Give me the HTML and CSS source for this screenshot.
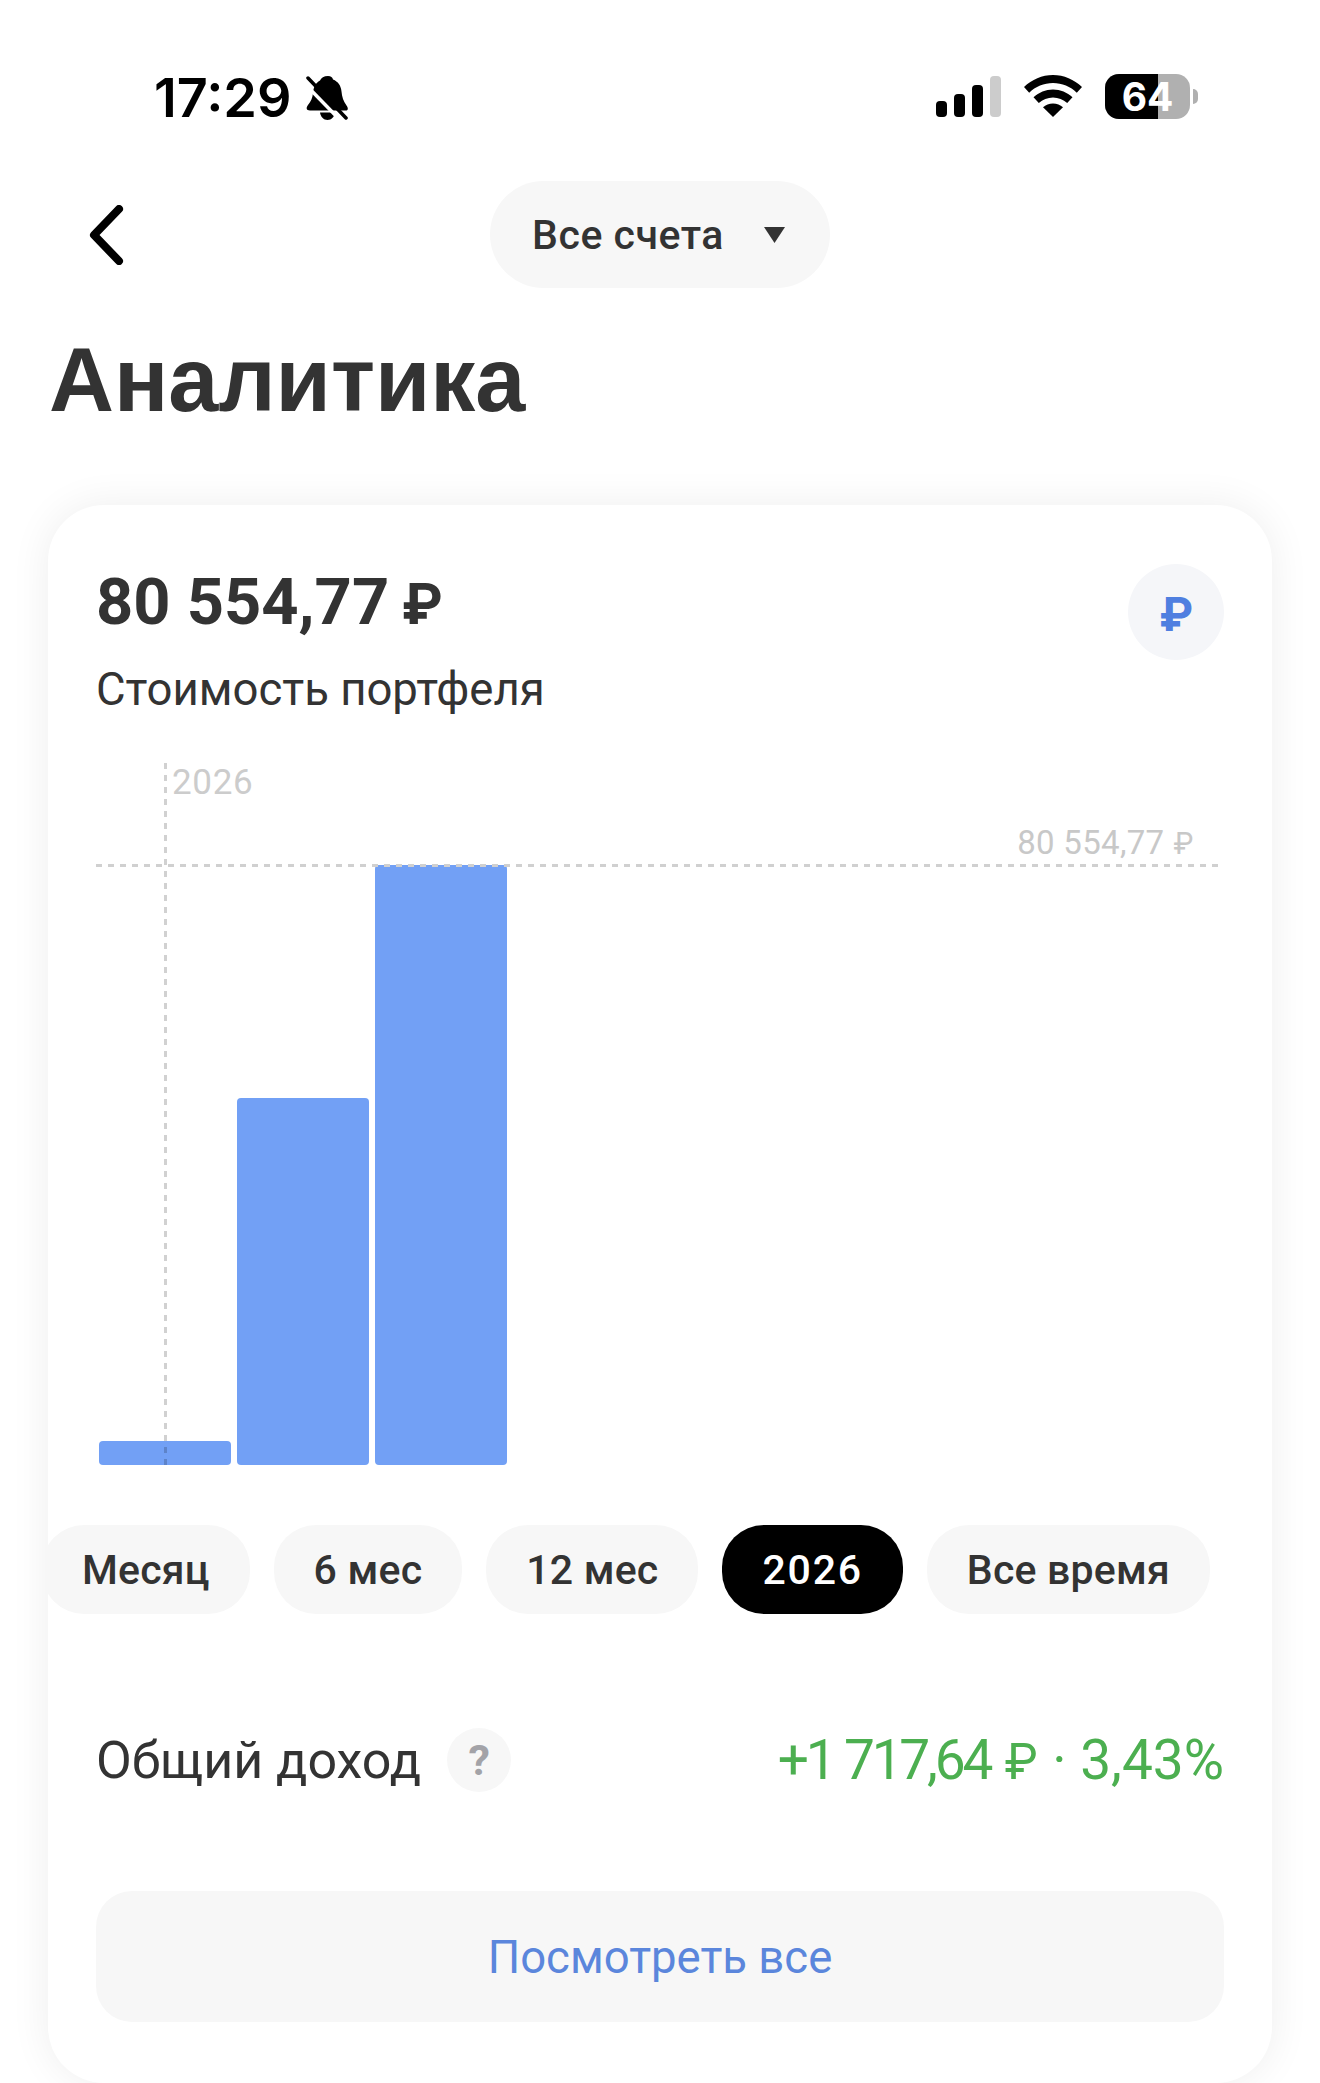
FILE: index.html
```html
<!DOCTYPE html>
<html lang="ru">
<head>
    <meta charset="UTF-8">
    <meta name="viewport" content="width=device-width, initial-scale=1.0">
    <title>Аналитика</title>
    <link rel="stylesheet" href="styles.css">
</head>
<body>
    <div class="status-bar">
        <div class="status-left">
            <span class="time">17:29</span>
            <svg class="bell" viewBox="0 0 44 44" width="44" height="44">
                <path d="M23 0c3 0 4.500 1.500 5 3.500 5 2 8 6 8.500 12 .4 5 2 10 5 14 1.500 2 2 4.500 0 5H5c-4 0-4-3-2-5.500 3-3.500 4.500-7 5-12 .5-5.500 2.500-10 7-12.500C16 2 19 0 23 0z" fill="#000"/>
                <path d="M15 36.500h15c-.5 4-3.500 7.500-7.500 7.500s-7-3.500-7.500-7.500z" fill="#000"/>
                <path d="M-2 6l38 39" stroke="#fff" stroke-width="3.500"/>
                <path d="M3 2l38 40" stroke="#000" stroke-width="3.500" stroke-linecap="round"/>
            </svg>
        </div>
        <div class="status-right">
            <div class="signal">
                <span class="signal-bar s1"></span>
                <span class="signal-bar s2"></span>
                <span class="signal-bar s3"></span>
                <span class="signal-bar s4"></span>
            </div>
            <svg class="wifi" viewBox="0 0 58 42" width="58" height="42">
                <path d="M29 0c11 0 21 4.500 29 12l-5.200 5.800C46.500 11.500 38 8 29 8S11.500 11.500 5.200 17.800L0 12C8 4.500 18 0 29 0z" fill="#000"/>
                <path d="M29 14.500c7.500 0 14 2.800 19.500 7.800l-5.300 5.700c-3.900-3.500-8.900-5.600-14.200-5.600s-10.300 2.100-14.200 5.600l-5.300-5.700C15 17.300 21.500 14.500 29 14.500z" fill="#000"/>
                <path d="M29 28.500c3.900 0 7.300 1.400 10 3.800L29 42 19 32.300C21.700 29.900 25.100 28.500 29 28.500z" fill="#000"/>
            </svg>
            <div class="battery">
                <div class="battery-body"><span class="battery-level"></span><span class="battery-num">64</span></div>
                <span class="battery-tip"></span>
            </div>
        </div>
    </div>

    <div class="topbar">
        <div class="back">
            <svg viewBox="0 0 36 60" width="36" height="60">
                <path d="M31 4L6 30l25 26" fill="none" stroke="#000" stroke-width="8" stroke-linecap="round" stroke-linejoin="round"/>
            </svg>
        </div>
        <div class="accounts">
            <span>Все счета</span>
            <svg viewBox="0 0 23 18" width="23" height="18"><path d="M1 1h21L11.500 17z" fill="#333"/></svg>
        </div>
    </div>

    <h1>Аналитика</h1>

    <div class="card">
        <div class="card-head">
            <div>
                <div class="amount">80 554,77 <span class="rub">₽</span></div>
                <div class="subtitle">Стоимость портфеля</div>
            </div>
            <div class="currency"><span>₽</span></div>
        </div>

        <div class="chart">
            <span class="year-line"></span>
            <span class="year-label">2026</span>
            <span class="max-line"></span>
            <span class="max-label">80 554,77 <span class="rub">₽</span></span>
            <div class="bars">
                <div class="bar" style="height: 24px"></div>
                <div class="bar" style="height: 367px"></div>
                <div class="bar" style="height: 600px"></div>
            </div>
        </div>

        <div class="periods">
            <div class="period">Месяц</div>
            <div class="period">6 мес</div>
            <div class="period">12 мес</div>
            <div class="period active">2026</div>
            <div class="period">Все время</div>
        </div>

        <div class="income">
            <div class="income-label">
                <span>Общий доход</span>
                <span class="help">?</span>
            </div>
            <div class="income-value"><span class="income-sum">+1 717,64</span> <span class="rub">₽</span> · 3,43%</div>
        </div>

        <div class="view-all">Посмотреть все</div>
    </div>
</body>
</html>
```

FILE: styles.css
```css
html, body {
    margin: 0;
    padding: 0;
}
body {
    width: 1320px;
    height: 2083px;
    overflow: hidden;
    background: #fff;
    color: #333;
    font-family: Roboto, 'Noto Sans', sans-serif;
}
.status-bar {
    display: flex;
    justify-content: space-between;
    align-items: center;
    height: 46px;
    padding: 73px 122px 0 154px;
}
.status-left {
    display: flex;
    align-items: center;
    gap: 13px;
    margin-top: 3px;
}
.time {
    font-family: Inter, sans-serif;
    font-size: 54px;
    font-weight: 600;
    color: #000;
}
.bell {
    display: block;
}
.status-right {
    display: flex;
    align-items: center;
    gap: 23px;
}
.signal {
    display: flex;
    align-items: flex-end;
    gap: 7px;
    height: 41px;
}
.signal-bar {
    width: 11px;
    border-radius: 4px;
    background: #000;
}
.s1 { height: 16px; }
.s2 { height: 23px; }
.s3 { height: 32px; }
.s4 { height: 41px; background: #ccc; }
.battery {
    display: flex;
    align-items: center;
    gap: 3px;
}
.battery-body {
    position: relative;
    width: 85px;
    height: 45px;
    border-radius: 14px;
    overflow: hidden;
    background: #b0b0b0;
    display: flex;
    justify-content: center;
    align-items: center;
}
.battery-level {
    position: absolute;
    left: 0;
    top: 0;
    bottom: 0;
    width: 53px;
    background: #000;
}
.battery-num {
    position: relative;
    font-family: Inter, sans-serif;
    font-size: 39px;
    font-weight: 700;
    color: #fff;
}
.battery-tip {
    width: 5px;
    height: 15px;
    border-radius: 0 6px 6px 0;
    background: #b0b0b0;
}
.topbar {
    display: grid;
    grid-template-columns: 1fr auto 1fr;
    align-items: center;
    height: 107px;
    margin-top: 62px;
}
.back {
    padding-left: 88px;
}
.back svg {
    display: block;
}
.accounts {
    display: flex;
    align-items: center;
    gap: 39px;
    height: 107px;
    padding: 0 44px 0 42px;
    border-radius: 54px;
    background: #f7f7f7;
    font-size: 41px;
    font-weight: 500;
    letter-spacing: 0.5px;
}
h1 {
    margin: 42px 0 0;
    padding-left: 49px;
    font-family: 'Liberation Sans', sans-serif;
    font-size: 90px;
    font-weight: 700;
    line-height: 100px;
    color: #333;
}
.card {
    height: 1519px;
    margin: 75px 48px 0;
    padding: 59px 48px 0;
    border-radius: 56px;
    background: #fff;
    box-shadow: 0 0 40px rgba(0, 0, 0, 0.07);
    overflow: hidden;
}
.card-head {
    display: flex;
    justify-content: space-between;
    align-items: flex-start;
}
.amount {
    padding-top: 1px;
    font-size: 65px;
    font-weight: 700;
    line-height: 74px;
}
.rub {
    font-family: Inter, 'DejaVu Sans', sans-serif;
    font-size: 0.9em;
    line-height: 1;
}
.amount .rub {
    font-size: 0.86em;
    margin-left: -4px;
}
.subtitle {
    margin-top: 26px;
    font-size: 45.5px;
    line-height: 50px;
}
.currency {
    display: flex;
    justify-content: center;
    align-items: center;
    width: 96px;
    height: 96px;
    border-radius: 50%;
    background: #f5f6f9;
    color: #4f7fe0;
    font-family: Inter, 'DejaVu Sans', sans-serif;
    font-size: 46px;
    font-weight: 700;
}
.currency span {
    padding-top: 4px;
}
.chart {
    position: relative;
    height: 702px;
    margin: 48px 2px 0 0;
}
.bars {
    display: flex;
    align-items: flex-end;
    gap: 6px;
    height: 100%;
    padding-left: 3px;
}
.bar {
    width: 132px;
    border-radius: 4px;
    background: #72a0f5;
}
.year-line {
    position: absolute;
    left: 68px;
    top: 0;
    bottom: 0;
    width: 3px;
    z-index: 1;
    background: repeating-linear-gradient(to bottom, rgba(0, 0, 0, 0.18) 0 6px, transparent 6px 12px);
}
.year-label {
    position: absolute;
    left: 76px;
    top: 1px;
    font-size: 35px;
    letter-spacing: 0.7px;
    line-height: 38px;
    color: #ccc;
}
.max-line {
    position: absolute;
    left: 0;
    right: 0;
    top: 101px;
    height: 3px;
    z-index: 1;
    background: repeating-linear-gradient(to right, #d0d0d0 0 6px, transparent 6px 12px);
}
.max-label {
    position: absolute;
    right: 28px;
    top: 62px;
    font-size: 33px;
    letter-spacing: 0.3px;
    line-height: 36px;
    color: #c8c8c8;
}
.periods {
    display: flex;
    gap: 24px;
    margin: 60px 0 0 -54px;
    white-space: nowrap;
}
.period {
    display: flex;
    align-items: center;
    height: 89px;
    padding: 0 40px;
    border-radius: 42px;
    background: #f7f7f7;
    font-size: 41px;
    font-weight: 500;
    letter-spacing: 0.2px;
}
.period.active {
    background: #000;
    color: #fff;
    letter-spacing: 1.8px;
}
.income {
    display: flex;
    justify-content: space-between;
    align-items: center;
    height: 64px;
    margin-top: 114px;
}
.income-label {
    display: flex;
    align-items: center;
    gap: 26px;
    font-size: 52px;
}
.help {
    display: flex;
    justify-content: center;
    align-items: center;
    width: 64px;
    height: 64px;
    border-radius: 50%;
    background: #f7f7f7;
    color: #a3a3a8;
    font-size: 43px;
    font-weight: 700;
}
.income-value {
    color: #4caf50;
    font-size: 55px;
}
.income-sum {
    letter-spacing: -3.2px;
}
.view-all {
    display: flex;
    justify-content: center;
    align-items: center;
    height: 131px;
    margin-top: 99px;
    padding-top: 2px;
    box-sizing: border-box;
    border-radius: 36px;
    background: #f7f7f7;
    color: #5b86dc;
    font-size: 45.5px;
}
```
